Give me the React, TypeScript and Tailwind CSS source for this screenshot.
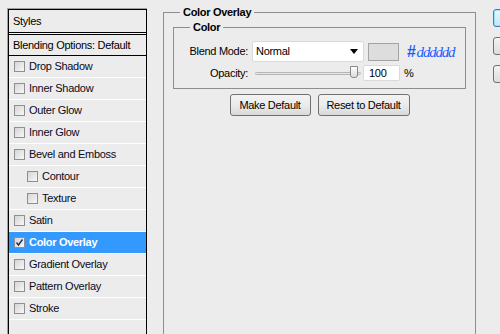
import React from "react";

type Item = { label: string; indent?: boolean; checked?: boolean; active?: boolean };

const ITEMS: Item[] = [
  { label: "Drop Shadow" },
  { label: "Inner Shadow" },
  { label: "Outer Glow" },
  { label: "Inner Glow" },
  { label: "Bevel and Emboss" },
  { label: "Contour", indent: true },
  { label: "Texture", indent: true },
  { label: "Satin" },
  { label: "Color Overlay", checked: true, active: true },
  { label: "Gradient Overlay" },
  { label: "Pattern Overlay" },
  { label: "Stroke" },
];

function Checkbox({ checked }: { checked?: boolean }) {
  return (
    <span className="flex h-[11px] w-[11px] shrink-0 items-center justify-center border border-[#8f8f8f] bg-gradient-to-br from-[#d6d6d6] to-[#f7f7f7]">
      {checked && (
        <svg width="9" height="9" viewBox="0 0 9 9">
          <path d="M1.5 4.5 L3.5 7 L7.5 1.5" fill="none" stroke="#1c2a6b" strokeWidth="1.4" />
        </svg>
      )}
    </span>
  );
}

function StyleRow({ item }: { item: Item }) {
  return (
    <div
      className={`flex h-[22px] items-center gap-[4px] border-b border-white ${item.indent ? "pl-[18px]" : "pl-[5px]"} ${item.active ? "bg-[#3399ff] font-bold text-white" : "text-[#0a0a1a]"}`}
    >
      <Checkbox checked={item.checked} />
      <span>{item.label}</span>
    </div>
  );
}

function Button({ children, w }: { children: React.ReactNode; w: string }) {
  return (
    <div
      className={`flex h-[22px] ${w} items-center justify-center rounded-[3px] border border-[#707070] bg-gradient-to-b from-[#f3f3f3] via-[#ebebeb] to-[#d9d9d9] text-black`}
    >
      {children}
    </div>
  );
}

export default function App() {
  return (
    <div className="relative flex h-[334px] w-[500px] overflow-hidden bg-[#ececec] pl-[7px] pt-[8px] font-['Liberation_Sans',Arial,sans-serif] text-[11px] tracking-[-0.3px] text-black">
      {/* styles list */}
      <div className="h-[400px] w-[140px] shrink-0 border-l border-t border-[#a0a0a0]">
        <div className="h-full border border-black">
          <div className="flex h-[23px] items-center border-b border-black pl-[4px]">Styles</div>
          <div className="h-px bg-[#f4f4f4]" />
          <div className="flex h-[22px] items-center border-y border-black pl-[4px]">Blending Options: Default</div>
          {ITEMS.map((it) => (
            <StyleRow key={it.label} item={it} />
          ))}
        </div>
      </div>

      {/* options */}
      <fieldset className="ml-[16px] mt-[-2px] h-[420px] w-[313px] shrink-0 border border-[#8e8e8e]">
        <legend className="ml-[16px] px-[3px] font-bold leading-[13px]">Color Overlay</legend>
        <fieldset className="ml-[9px] mt-[2px] h-[68px] w-[293px] border border-[#8e8e8e]">
          <legend className="ml-[16px] px-[3px] font-bold leading-[13px]">Color</legend>
          <div className="mt-[7px] flex items-center">
            <span className="w-[74px] text-right">Blend Mode:</span>
            <div className="ml-[4px] flex h-[21px] w-[112px] items-center justify-between rounded-[2px] border border-[#dadada] bg-white pl-[3px] pr-[5px]">
              <span>Normal</span>
              <svg width="8" height="5" viewBox="0 0 8 5">
                <polygon points="0,0 8,0 4,5" fill="#000" />
              </svg>
            </div>
            <div className="ml-[4px] h-[18px] w-[31px] border border-[#a3a3a3] bg-[#dddddd]" />
            <span className="ml-[8px] flex items-baseline leading-none text-[#1b5cff]">
              <span className="font-['Liberation_Sans',Arial,sans-serif] text-[16px] font-bold">#</span>
              <span className="ml-[1px] font-['Liberation_Serif',serif] text-[15px] italic tracking-[-1.2px]">dddddd</span>
            </span>
          </div>
          <div className="mt-[3px] flex items-center">
            <span className="w-[74px] text-right">Opacity:</span>
            <div className="relative ml-[7px] flex h-[16px] w-[106px] items-center">
              <div className="h-[3px] w-full rounded-sm border border-[#b5b5b5] bg-[#e6e6e6]" />
              <div className="absolute left-[95px] top-[1px] h-[12px] w-[8px] rounded-b-[3px] border border-[#8a8a8a] bg-gradient-to-b from-white to-[#dcdcdc]" />
            </div>
            <div className="ml-[2px] flex h-[16px] w-[37px] items-center rounded-[2px] border border-[#dadada] bg-white pl-[5px]">100</div>
            <span className="ml-[4px]">%</span>
          </div>
        </fieldset>
        <div className="mt-[5px] flex justify-center gap-[7px]">
          <Button w="w-[81px]">Make Default</Button>
          <Button w="w-[92px]">Reset to Default</Button>
        </div>
      </fieldset>

      {/* dialog buttons (clipped) */}
      <div className="ml-[17px] mt-[1px] flex shrink-0 flex-col gap-[10px]">
        <div className="h-[18px] w-[80px] rounded-[3px] border border-[#3c7fb1] bg-gradient-to-b from-[#eaf6fd] to-[#bee6fd] shadow-[inset_0_0_0_1px_#9de0fc]" />
        <div className="h-[18px] w-[80px] rounded-[3px] border border-[#707070] bg-gradient-to-b from-[#f3f3f3] to-[#dcdcdc]" />
        <div className="h-[18px] w-[80px] rounded-[3px] border border-[#707070] bg-gradient-to-b from-[#f3f3f3] to-[#dcdcdc]" />
      </div>
    </div>
  );
}
